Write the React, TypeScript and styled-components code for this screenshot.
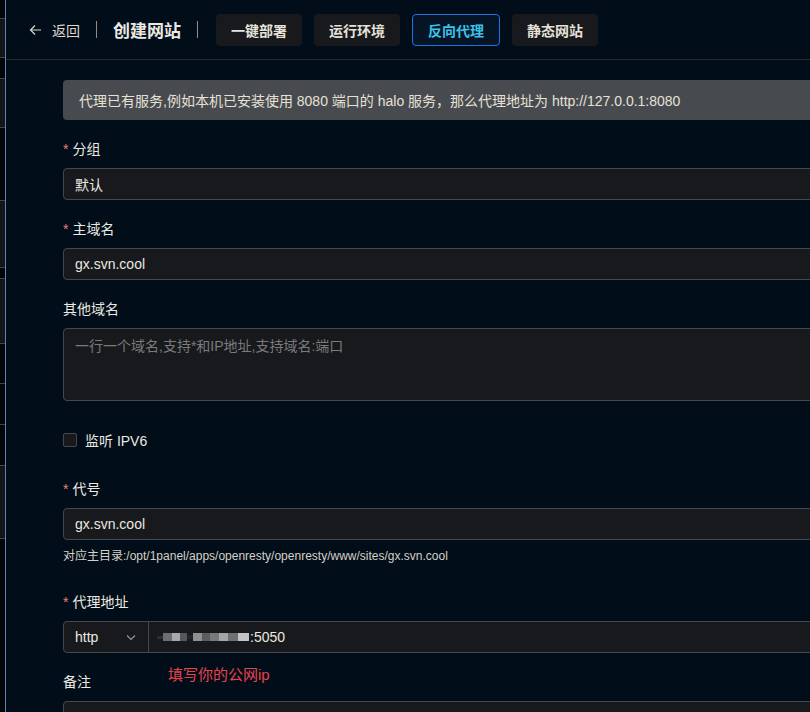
import React from "react";
import styled, { createGlobalStyle, css } from "styled-components";

const GlobalStyle = createGlobalStyle`
  html, body {
    margin: 0;
    padding: 0;
    background: #010e19;
    overflow: hidden;
  }
  body {
    font-family: "Liberation Sans", "Noto Sans CJK SC", sans-serif;
    color: #e8e4dc;
  }
`;

const Shell = styled.div`
  display: flex;
  width: 810px;
  height: 712px;
  overflow: hidden;
`;

const SideStrip = styled.div`
  width: 5px;
  flex: none;
  border-right: 1px solid #5b86b3;
  display: flex;
  flex-direction: column;
`;

const StripRow = styled.div<{ $dark?: boolean }>`
  flex: none;
  background: ${(p) => (p.$dark ? "#050608" : "#141516")};
  border-bottom: 1px solid #4a4538;
`;

const Main = styled.div`
  flex: 1;
  min-width: 0;
  display: flex;
  flex-direction: column;
`;

const Header = styled.div`
  height: 60px;
  flex: none;
  display: flex;
  align-items: center;
  padding-left: 23px;
  border-bottom: 1px solid #26292c;
  box-sizing: border-box;
`;

const Back = styled.div`
  display: flex;
  align-items: center;
  gap: 10px;
  font-size: 14px;
  color: #ddd8cf;
`;

const Divider = styled.span`
  width: 1px;
  height: 17px;
  background: #9c8a78;
  margin: 0 16px;
`;

const Title = styled.div`
  font-size: 17px;
  font-weight: 600;
  color: #ece9e3;
`;

const Tabs = styled.div`
  display: flex;
  gap: 12px;
  padding-left: 2px;
`;

const Tab = styled.button<{ $active?: boolean }>`
  height: 32px;
  padding: 0 14px;
  border-radius: 4px;
  border: 1px solid transparent;
  background: #17191c;
  color: #e6e2da;
  font-family: inherit;
  font-size: 14px;
  font-weight: 600;
  cursor: pointer;
  ${(p) =>
    p.$active &&
    css`
      padding: 0 15px;
      border-color: #1d74e0;
      background: #061526;
      color: #3cc2e6;
    `}
`;

const Form = styled.div`
  width: 900px;
  padding: 20px 0 0 57px;
  display: flex;
  flex-direction: column;
  position: relative;
`;

const Alert = styled.div`
  height: 40px;
  display: flex;
  align-items: center;
  padding-left: 16px;
  background: #474b4f;
  border-radius: 4px;
  font-size: 14px;
  color: #e6e0d6;
  margin-bottom: 18px;
`;

const Item = styled.div<{ $gap?: number }>`
  display: flex;
  flex-direction: column;
  margin-bottom: ${(p) => p.$gap ?? 18}px;
`;

const Label = styled.div<{ $required?: boolean }>`
  height: 22px;
  line-height: 22px;
  margin-bottom: 8px;
  font-size: 14px;
  color: #ebe8e2;
  ${(p) =>
    p.$required &&
    css`
      &::before {
        content: "*";
        color: #e5807c;
        margin-right: 4px;
      }
    `}
`;

const Input = styled.div<{ $area?: boolean; $placeholder?: boolean }>`
  height: ${(p) => (p.$area ? "73px" : "32px")};
  box-sizing: border-box;
  background: #17191c;
  border: 1px solid #45484c;
  border-radius: 4px;
  padding: ${(p) => (p.$area ? "6px 11px" : "0 11px")};
  display: flex;
  align-items: ${(p) => (p.$area ? "flex-start" : "center")};
  font-size: 14px;
  color: ${(p) => (p.$placeholder ? "#7a7b7c" : "#ece8e1")};
`;

const CheckRow = styled.label`
  height: 41px;
  display: flex;
  align-items: center;
  gap: 8px;
  margin-bottom: 18px;
  font-size: 14px;
  color: #ebe8e2;
`;

const Box = styled.span`
  width: 14px;
  height: 14px;
  box-sizing: border-box;
  border: 1px solid #45484c;
  background: #17191c;
  border-radius: 2px;
`;

const Help = styled.div`
  font-size: 12px;
  line-height: 20px;
  margin-top: 6px;
  color: #d6d0c6;
`;

const Group = styled.div`
  height: 32px;
  box-sizing: border-box;
  display: flex;
  background: #17191c;
  border: 1px solid #45484c;
  border-radius: 4px;
  font-size: 14px;
  color: #ece8e1;
`;

const Select = styled.div`
  width: 85px;
  flex: none;
  box-sizing: border-box;
  display: flex;
  align-items: center;
  justify-content: space-between;
  padding: 0 11px;
  border-right: 1px solid #45484c;
`;

const AddrValue = styled.div`
  display: flex;
  align-items: center;
  padding-left: 8px;
`;

const Mosaic = styled.div`
  display: flex;
  align-items: center;
  height: 14px;
  margin-right: 1px;
`;

const Px = styled.span<{ $c: string; $w: number; $h?: number }>`
  width: ${(p) => p.$w}px;
  height: ${(p) => p.$h ?? 8}px;
  background: ${(p) => p.$c};
`;

const Note = styled.div`
  position: absolute;
  left: 162px;
  top: 603px;
  font-size: 15px;
  color: #e8424d;
`;

const stripRows: { h: number; dark?: boolean }[] = [
  { h: 18, dark: true },
  { h: 38 },
  { h: 20, dark: true },
  { h: 48 },
  { h: 72, dark: true },
  { h: 66 },
  { h: 10, dark: true },
  { h: 64 },
  { h: 39, dark: true },
  { h: 40, dark: true },
  { h: 40, dark: true },
  { h: 72 },
  { h: 175, dark: true },
];

const mosaic = [
  { c: "#2a2d31", w: 6, h: 3 },
  { c: "#6b6d70", w: 9 },
  { c: "#a7a8aa", w: 8 },
  { c: "#55575a", w: 7 },
  { c: "#222528", w: 6, h: 4 },
  { c: "#8e9092", w: 9 },
  { c: "#5b5d60", w: 8 },
  { c: "#77797b", w: 9 },
  { c: "#a5a6a8", w: 9 },
  { c: "#6e7073", w: 10 },
  { c: "#c3c4c5", w: 11 },
];

export default function App() {
  return (
    <>
      <GlobalStyle />
      <Shell>
        <SideStrip>
          {stripRows.map((r, i) => (
            <StripRow key={i} $dark={r.dark} style={{ height: r.h }} />
          ))}
        </SideStrip>
        <Main>
          <Header>
            <Back>
              <svg width="13" height="12" viewBox="0 0 13 12" fill="none">
                <path d="M12 6H1.5M6 1.5L1.5 6L6 10.5" stroke="#d8d4cc" strokeWidth="1.2" />
              </svg>
              <span>返回</span>
            </Back>
            <Divider />
            <Title>创建网站</Title>
            <Divider />
            <Tabs>
              <Tab>一键部署</Tab>
              <Tab>运行环境</Tab>
              <Tab $active>反向代理</Tab>
              <Tab>静态网站</Tab>
            </Tabs>
          </Header>
          <Form>
            <Alert>代理已有服务,例如本机已安装使用 8080 端口的 halo 服务，那么代理地址为 http://127.0.0.1:8080</Alert>
            <Item>
              <Label $required>分组</Label>
              <Input>默认</Input>
            </Item>
            <Item>
              <Label $required>主域名</Label>
              <Input>gx.svn.cool</Input>
            </Item>
            <Item>
              <Label>其他域名</Label>
              <Input $area $placeholder>
                一行一个域名,支持*和IP地址,支持域名:端口
              </Input>
            </Item>
            <CheckRow>
              <Box />
              监听 IPV6
            </CheckRow>
            <Item $gap={25}>
              <Label $required>代号</Label>
              <Input>gx.svn.cool</Input>
              <Help>对应主目录:/opt/1panel/apps/openresty/openresty/www/sites/gx.svn.cool</Help>
            </Item>
            <Item>
              <Label $required>代理地址</Label>
              <Group>
                <Select>
                  <span>http</span>
                  <svg width="12" height="12" viewBox="0 0 12 12" fill="none">
                    <path d="M2 4.5L6 8.5L10 4.5" stroke="#9a9a9a" strokeWidth="1.1" />
                  </svg>
                </Select>
                <AddrValue>
                  <Mosaic>
                    {mosaic.map((m, i) => (
                      <Px key={i} $c={m.c} $w={m.w} $h={m.h} />
                    ))}
                  </Mosaic>
                  :5050
                </AddrValue>
              </Group>
            </Item>
            <Item>
              <Label>备注</Label>
              <Input $area />
            </Item>
            <Note>填写你的公网ip</Note>
          </Form>
        </Main>
      </Shell>
    </>
  );
}
